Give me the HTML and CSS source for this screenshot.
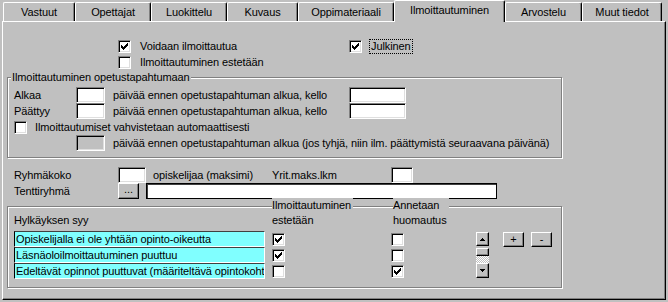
FILE: index.html
```html
<!DOCTYPE html>
<html lang="fi">
<head>
<meta charset="UTF-8">
<meta name="viewport" content="width=device-width, initial-scale=1.0">
<title>Ilmoittautuminen</title>
<link rel="stylesheet" href="styles.css">
</head>
<body>

<div class="tabs">
  <div class="tab tab-vastuut">Vastuut</div>
  <div class="tab tab-opettajat">Opettajat</div>
  <div class="tab tab-luokittelu">Luokittelu</div>
  <div class="tab tab-kuvaus">Kuvaus</div>
  <div class="tab tab-materiaali">Oppimateriaali</div>
  <div class="tab tab-ilmo active">Ilmoittautuminen</div>
  <div class="tab tab-arvostelu">Arvostelu</div>
  <div class="tab tab-muut">Muut tiedot</div>
</div>

<div class="panel">

  <div class="checks">
    <div class="check-row">
      <label class="check-item check-wide">
        <span class="checkbox"><svg viewBox="0 0 7 7" width="7" height="7"><path d="M0 2h1v1h1v1h1V3h1V2h1V1h1V0h1v3H6v1H5v1H4v1H3v1H2V6H1V5H0z"/></svg></span>
        <span class="check-label">Voidaan ilmoittautua</span>
      </label>
      <label class="check-item">
        <span class="checkbox"><svg viewBox="0 0 7 7" width="7" height="7"><path d="M0 2h1v1h1v1h1V3h1V2h1V1h1V0h1v3H6v1H5v1H4v1H3v1H2V6H1V5H0z"/></svg></span>
        <span class="check-label focus">Julkinen</span>
      </label>
    </div>
    <div class="check-row">
      <label class="check-item">
        <span class="checkbox"></span>
        <span class="check-label">Ilmoittautuminen estetään</span>
      </label>
    </div>
  </div>

  <div class="group group-signup">
    <div class="group-title">Ilmoittautuminen opetustapahtumaan</div>
    <div class="form-row first">
      <span class="row-label">Alkaa</span>
      <span class="field days"></span>
      <span class="row-text">päivää ennen opetustapahtuman alkua, kello</span>
      <span class="field clock"></span>
    </div>
    <div class="form-row">
      <span class="row-label">Päättyy</span>
      <span class="field days"></span>
      <span class="row-text">päivää ennen opetustapahtuman alkua, kello</span>
      <span class="field clock"></span>
    </div>
    <div class="form-row">
      <span class="checkbox"></span>
      <span class="check-label">Ilmoittautumiset vahvistetaan automaattisesti</span>
    </div>
    <div class="form-row indent">
      <span class="field days disabled"></span>
      <span class="row-text">päivää ennen opetustapahtuman alkua (jos tyhjä, niin ilm. päättymistä seuraavana päivänä)</span>
    </div>
  </div>

  <div class="plain-row size-row">
    <span class="plain-label">Ryhmäkoko</span>
    <span class="field size"></span>
    <span class="size-text">opiskelijaa (maksimi)</span>
    <span class="tries-label">Yrit.maks.lkm</span>
    <span class="field tries"></span>
  </div>
  <div class="plain-row">
    <span class="plain-label">Tenttiryhmä</span>
    <span class="btn dots">...</span>
    <span class="field exam-group"></span>
  </div>

  <div class="group group-reasons">
    <div class="reason-head">
      <span class="reason-title">Hylkäyksen syy</span>
      <span class="col-head col-blocked"><span>Ilmoittautuminen<br>estetään</span></span>
      <span class="col-head"><span>Annetaan<br>huomautus</span></span>
    </div>
    <div class="reason-list">
      <div class="reason-rows">
        <div class="reason-row">
          <span class="reason-text">Opiskelijalla ei ole yhtään opinto-oikeutta</span>
          <span class="checkbox col1"><svg viewBox="0 0 7 7" width="7" height="7"><path d="M0 2h1v1h1v1h1V3h1V2h1V1h1V0h1v3H6v1H5v1H4v1H3v1H2V6H1V5H0z"/></svg></span>
          <span class="checkbox col2"></span>
        </div>
        <div class="reason-row">
          <span class="reason-text">Läsnäoloilmoittautuminen puuttuu</span>
          <span class="checkbox col1"><svg viewBox="0 0 7 7" width="7" height="7"><path d="M0 2h1v1h1v1h1V3h1V2h1V1h1V0h1v3H6v1H5v1H4v1H3v1H2V6H1V5H0z"/></svg></span>
          <span class="checkbox col2"></span>
        </div>
        <div class="reason-row">
          <span class="reason-text">Edeltävät opinnot puuttuvat (määriteltävä opintokoht</span>
          <span class="checkbox col1"></span>
          <span class="checkbox col2"><svg viewBox="0 0 7 7" width="7" height="7"><path d="M0 2h1v1h1v1h1V3h1V2h1V1h1V0h1v3H6v1H5v1H4v1H3v1H2V6H1V5H0z"/></svg></span>
        </div>
      </div>

      <div class="scrollbar">
        <span class="btn scroll-up"><svg viewBox="0 0 5 3" width="5" height="3"><path d="M2 0h1v1h1v1h1v1H0V2h1V1h1z"/></svg></span>
        <span class="scroll-gap"></span>
        <span class="btn scroll-thumb"></span>
        <span class="scroll-track"></span>
        <span class="btn scroll-down"><svg viewBox="0 0 5 3" width="5" height="3"><path d="M0 0h5v1H4v1H3v1H2V2H1V1H0z"/></svg></span>
      </div>

      <div class="list-buttons">
        <span class="btn small">+</span>
        <span class="btn small">-</span>
      </div>
    </div>
  </div>

</div>

</body>
</html>
```

FILE: styles.css
```css
body {
  font-family: "Liberation Sans", Arial, sans-serif;
  font-size: 11px;
  line-height: 13px;
  letter-spacing: -0.1px;
  color: #000;
  background-color: #c0c0c0;
  margin: 0;
  padding: 0;
}

/* Tab strip */
.tabs {
  display: flex;
  align-items: flex-end;
  height: 21px;
  padding-left: 3px;
}

.tab {
  box-sizing: border-box;
  height: 19px;
  line-height: 18px;
  text-align: center;
  white-space: nowrap;
  background-color: #c0c0c0;
  border-top: 1px solid #fff;
  border-left: 1px solid #fff;
  border-right: 1px solid #000;
  border-radius: 2px 2px 0 0;
  box-shadow: inset -1px 0 #808080;
}

.tab.active {
  position: relative;
  z-index: 1;
  height: 22px;
  margin-bottom: -1px;
}

.tab-vastuut { width: 72px; }
.tab-opettajat { width: 76px; }
.tab-luokittelu { width: 76px; }
.tab-kuvaus { width: 71px; }
.tab-materiaali { width: 96px; }
.tab-ilmo { width: 111px; }
.tab-arvostelu { width: 77px; }
.tab-muut { width: 80px; }

/* Page under the tabs */
.panel {
  box-sizing: border-box;
  margin-left: 2px;
  width: 664px;
  height: 279px;
  border-top: 1px solid #fff;
  border-left: 1px solid #fff;
  border-right: 1px solid #000;
  border-bottom: 1px solid #000;
  box-shadow: inset -1px -1px #808080;
}

/* Checkboxes */
.checks {
  padding: 16px 0 0 115px;
}

.check-row {
  display: flex;
  align-items: center;
  height: 16px;
}

.check-item {
  display: flex;
  align-items: center;
}

.check-wide {
  width: 231px;
}

.checkbox {
  box-sizing: border-box;
  flex: none;
  display: flex;
  align-items: center;
  justify-content: center;
  width: 13px;
  height: 13px;
  background-color: #fff;
  border-top: 1px solid #808080;
  border-left: 1px solid #808080;
  border-bottom: 1px solid #fff;
  border-right: 1px solid #fff;
  box-shadow: inset 1px 1px #000, inset -1px -1px #dfdfdf;
}

.checkbox svg,
.btn svg {
  display: block;
  shape-rendering: crispEdges;
}

.check-label {
  margin-left: 9px;
  white-space: nowrap;
}

.check-label.focus {
  margin-left: 7px;
  padding: 0 1px;
  border: 1px dotted #000;
}

/* Etched group boxes */
.group {
  box-sizing: border-box;
  margin-left: 4px;
  width: 555px;
  border: 1px solid #808080;
  box-shadow: inset 1px 1px #fff, 1px 1px #fff;
}

.group-signup {
  margin-top: 7px;
  padding-bottom: 6px;
}

.group-title {
  width: max-content;
  margin: -7px 0 0 3px;
  padding: 0 1px;
  background-color: #c0c0c0;
}

.form-row {
  display: flex;
  align-items: center;
  height: 16px;
  padding-left: 6px;
  white-space: nowrap;
}

.form-row.first {
  margin-top: 3px;
}

.form-row.indent {
  padding-left: 68px;
}

.form-row .check-label {
  margin-left: 8px;
}

.row-label {
  width: 62px;
}

.row-text {
  margin-left: 8px;
  width: 236px;
}

.form-row.indent .row-text {
  width: auto;
}

/* Sunken text fields */
.field {
  box-sizing: border-box;
  flex: none;
  height: 16px;
  background-color: #fff;
  border-top: 1px solid #808080;
  border-left: 1px solid #808080;
  border-bottom: 1px solid #fff;
  border-right: 1px solid #fff;
  box-shadow: inset 1px 1px #000, inset -1px -1px #dfdfdf;
}

.field.disabled {
  background-color: #c0c0c0;
}

.field.days { width: 29px; }
.field.clock { width: 57px; }
.field.size { width: 28px; }
.field.tries { width: 22px; }

.field.exam-group {
  width: 351px;
  margin-left: 7px;
  border: 1px solid #000;
  box-shadow: inset 1px 1px #404040;
}

/* Raised buttons */
.btn {
  box-sizing: border-box;
  flex: none;
  display: flex;
  align-items: center;
  justify-content: center;
  background-color: #c0c0c0;
  border-top: 1px solid #fff;
  border-left: 1px solid #fff;
  border-right: 1px solid #000;
  border-bottom: 1px solid #000;
  box-shadow: inset -1px -1px #808080;
}

.btn.dots {
  width: 21px;
  height: 16px;
  line-height: 10px;
  align-items: flex-start;
}

.btn.small {
  width: 21px;
  height: 15px;
}

/* Ryhmäkoko and Tenttiryhmä */
.plain-row {
  display: flex;
  align-items: center;
  height: 16px;
  padding-left: 11px;
  white-space: nowrap;
}

.size-row {
  margin-top: 9px;
}

.plain-label {
  width: 104px;
}

.size-text {
  margin-left: 7px;
  width: 119px;
}

.tries-label {
  width: 119px;
}

/* Hylkäyksen syy list */
.group-reasons {
  margin-top: 7px;
  padding-bottom: 8px;
}

.reason-head {
  display: flex;
  align-items: flex-end;
  margin-top: -9px;
  padding-left: 6px;
  line-height: 15px;
  white-space: nowrap;
}

.reason-title {
  width: 258px;
}

.col-head span {
  display: inline-block;
  vertical-align: top;
  padding-right: 2px;
  background-color: #c0c0c0;
}

.col-blocked {
  width: 121px;
}

.reason-list {
  display: flex;
  margin-top: 3px;
  padding-left: 6px;
}

.reason-rows {
  width: 390px;
}

.reason-row {
  display: flex;
  align-items: center;
  height: 16px;
}

.reason-text {
  box-sizing: border-box;
  width: 251px;
  height: 16px;
  padding-left: 1px;
  line-height: 14px;
  white-space: nowrap;
  overflow: hidden;
  background-color: #80ffff;
  border-top: 1px solid #404040;
  border-left: 1px solid #000;
  border-bottom: 1px solid #fff;
  border-right: 1px solid #fff;
}

.checkbox.col1 {
  margin-left: 7px;
}

.checkbox.col2 {
  margin-left: 106px;
}

.scrollbar {
  display: flex;
  flex-direction: column;
  width: 13px;
  margin: 1px 0 0 72px;
}

.scroll-up { height: 14px; }
.scroll-down { height: 15px; }
.scroll-gap { height: 2px; }
.scroll-thumb { height: 8px; }

.scroll-track {
  height: 7px;
  background: repeating-conic-gradient(#c0c0c0 0 25%, #fff 0 50%) 0 0 / 2px 2px;
}

.list-buttons {
  display: flex;
  align-self: flex-start;
  gap: 7px;
  margin: 1px 0 0 14px;
}
```
